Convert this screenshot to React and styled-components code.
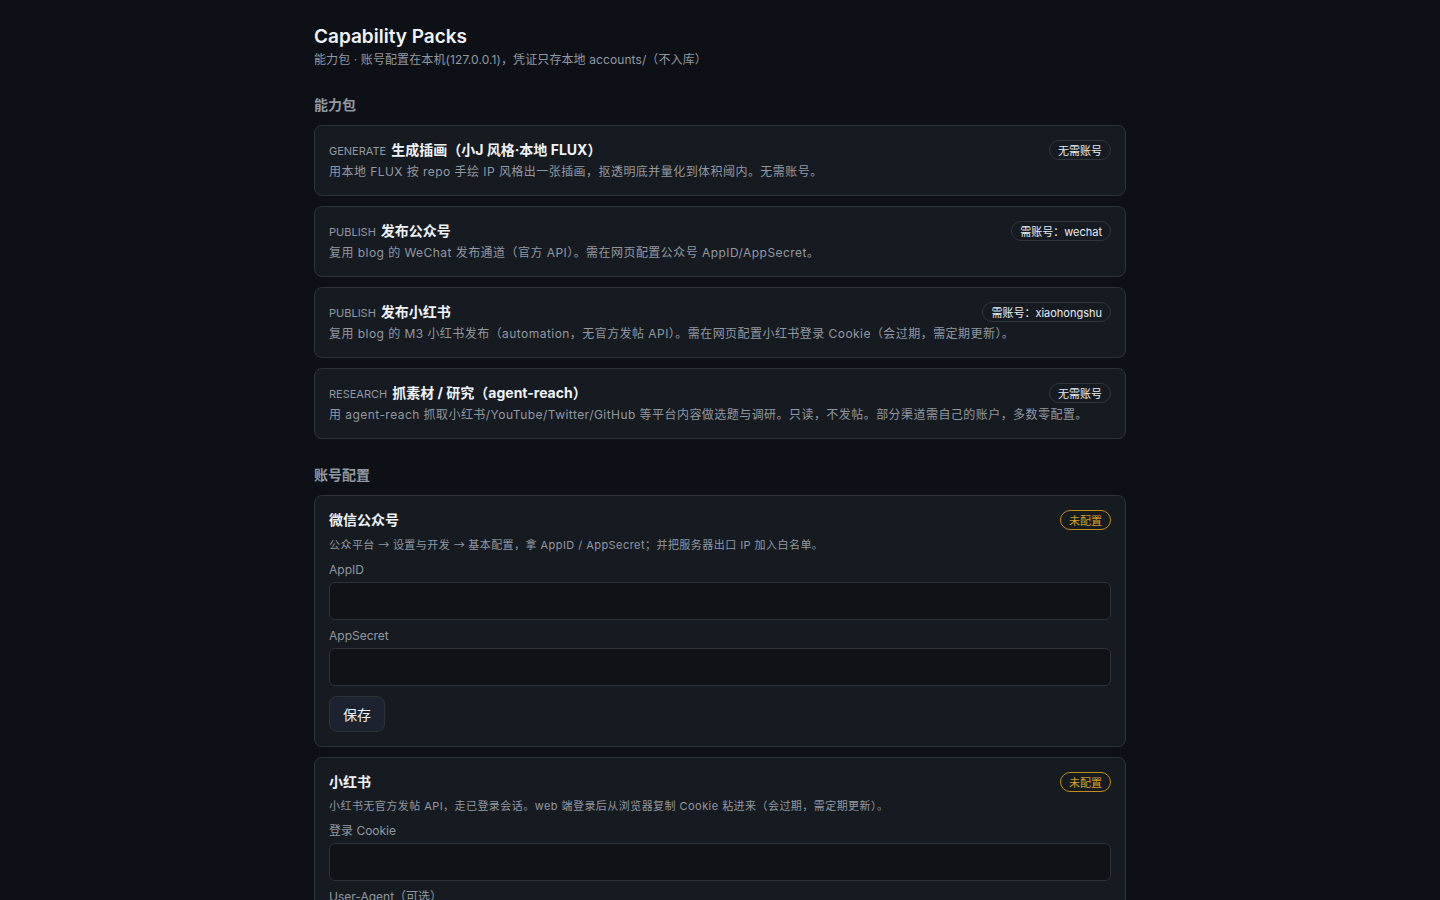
import styled, { createGlobalStyle } from 'styled-components';

const GlobalStyle = createGlobalStyle`
  html, body {
    margin: 0;
    background: #0d1117;
    color: #e6edf3;
    font-family: 'Inter', 'Noto Sans CJK SC', sans-serif;
    -webkit-font-smoothing: antialiased;
  }
  * { box-sizing: border-box; }
`;

const Page = styled.main`
  width: 812px;
  margin: 0 auto;
  padding: 24px 0 40px;
`;

const Title = styled.h1`
  margin: 0;
  font-size: 19px;
  line-height: 26px;
  font-weight: 600;
  color: #f0f3f6;
`;

const Subtitle = styled.p`
  margin: 1px 0 0;
  font-size: 12px;
  line-height: 18px;
  letter-spacing: 0.1px;
  color: #9198a1;
`;

const SectionTitle = styled.h2`
  margin: 26px 0 10px;
  font-size: 14px;
  line-height: 20px;
  font-weight: 600;
  color: #9198a1;
`;

const List = styled.div`
  display: flex;
  flex-direction: column;
  gap: 10px;
`;

const Card = styled.section`
  background: #161b22;
  border: 1px solid #2d333b;
  border-radius: 8px;
  padding: 14px;
`;

const CardHead = styled.div`
  display: flex;
  align-items: center;
  justify-content: space-between;
  height: 20px;
`;

const CardTitle = styled.div`
  font-size: 14px;
  line-height: 20px;
  height: 20px;
  font-weight: 700;
  color: #f0f3f6;
`;

const Kind = styled.span`
  font-size: 11px;
  line-height: 1;
  font-weight: 400;
  color: #9198a1;
  margin-right: 5px;
`;

const Desc = styled.p`
  margin: ${(p) => (p.$small ? '5px' : '3px')} 0 0;
  font-size: ${(p) => (p.$small ? '11px' : '12px')};
  line-height: 18px;
  letter-spacing: 0.45px;
  color: #9198a1;
`;

const Arrow = styled.span`
  font-family: 'Noto Sans CJK SC', sans-serif;
  letter-spacing: 0;
`;

const Badge = styled.span`
  display: inline-flex;
  align-items: center;
  height: 20px;
  padding: 0 8px;
  border-radius: 999px;
  font-size: 11px;
  white-space: nowrap;
  border: 1px solid ${(p) => (p.$warn ? '#c38d1c' : '#30363d')};
  color: ${(p) => (p.$warn ? '#d4a020' : '#e6edf3')};
`;

const Field = styled.label`
  display: block;
  margin-top: 7px;
`;

const FieldLabel = styled.span`
  display: block;
  font-size: 12px;
  line-height: 18px;
  color: #9198a1;
  margin-bottom: 3px;
`;

const Input = styled.input`
  display: block;
  width: 100%;
  height: 38px;
  background: #0f1217;
  border: 1px solid #2d333b;
  border-radius: 6px;
  padding: 0 10px;
  color: #e6edf3;
  font: inherit;
  font-size: 13px;
  outline: none;
`;

const SaveButton = styled.button`
  margin-top: 10px;
  height: 36px;
  padding: 0 13px;
  background: #1c2230;
  border: 1px solid #2d333b;
  border-radius: 8px;
  color: #f0f3f6;
  font-family: inherit;
  font-size: 14px;
  cursor: pointer;
`;

const packs = [
  {
    kind: 'GENERATE',
    title: '生成插画（小J 风格·本地 FLUX）',
    desc: '用本地 FLUX 按 repo 手绘 IP 风格出一张插画，抠透明底并量化到体积阈内。无需账号。',
    badge: '无需账号',
  },
  {
    kind: 'PUBLISH',
    title: '发布公众号',
    desc: '复用 blog 的 WeChat 发布通道（官方 API）。需在网页配置公众号 AppID/AppSecret。',
    badge: '需账号：wechat',
  },
  {
    kind: 'PUBLISH',
    title: '发布小红书',
    desc: '复用 blog 的 M3 小红书发布（automation，无官方发帖 API）。需在网页配置小红书登录 Cookie（会过期，需定期更新）。',
    badge: '需账号：xiaohongshu',
  },
  {
    kind: 'RESEARCH',
    title: '抓素材 / 研究（agent-reach）',
    desc: '用 agent-reach 抓取小红书/YouTube/Twitter/GitHub 等平台内容做选题与调研。只读，不发帖。部分渠道需自己的账户，多数零配置。',
    badge: '无需账号',
  },
];

const accounts = [
  {
    id: 'wechat',
    title: '微信公众号',
    desc: '公众平台 → 设置与开发 → 基本配置，拿 AppID / AppSecret；并把服务器出口 IP 加入白名单。',
    fields: ['AppID', 'AppSecret'],
  },
  {
    id: 'xhs',
    title: '小红书',
    desc: '小红书无官方发帖 API，走已登录会话。web 端登录后从浏览器复制 Cookie 粘进来（会过期，需定期更新）。',
    fields: ['登录 Cookie', 'User-Agent（可选）'],
  },
];

// arrows in the hints render wider in a CJK face
const withArrows = (text) =>
  text.split('→').flatMap((part, i) => (i === 0 ? [part] : [<Arrow key={i}>→</Arrow>, part]));

const App = () => (
  <>
    <GlobalStyle />
    <Page>
      <Title>Capability Packs</Title>
      <Subtitle>能力包 · 账号配置在本机(127.0.0.1)，凭证只存本地 accounts/（不入库）</Subtitle>

      <SectionTitle>能力包</SectionTitle>
      <List>
        {packs.map((p) => (
          <Card key={p.title}>
            <CardHead>
              <CardTitle>
                <Kind>{p.kind}</Kind>
                {p.title}
              </CardTitle>
              <Badge>{p.badge}</Badge>
            </CardHead>
            <Desc>{p.desc}</Desc>
          </Card>
        ))}
      </List>

      <SectionTitle>账号配置</SectionTitle>
      <List>
        {accounts.map((a) => (
          <Card key={a.id}>
            <CardHead>
              <CardTitle>{a.title}</CardTitle>
              <Badge $warn>未配置</Badge>
            </CardHead>
            <Desc $small>{withArrows(a.desc)}</Desc>
            {a.fields.map((f) => (
              <Field key={f}>
                <FieldLabel>{f}</FieldLabel>
                <Input type="text" />
              </Field>
            ))}
            <SaveButton>保存</SaveButton>
          </Card>
        ))}
      </List>
    </Page>
  </>
);

export default App;
